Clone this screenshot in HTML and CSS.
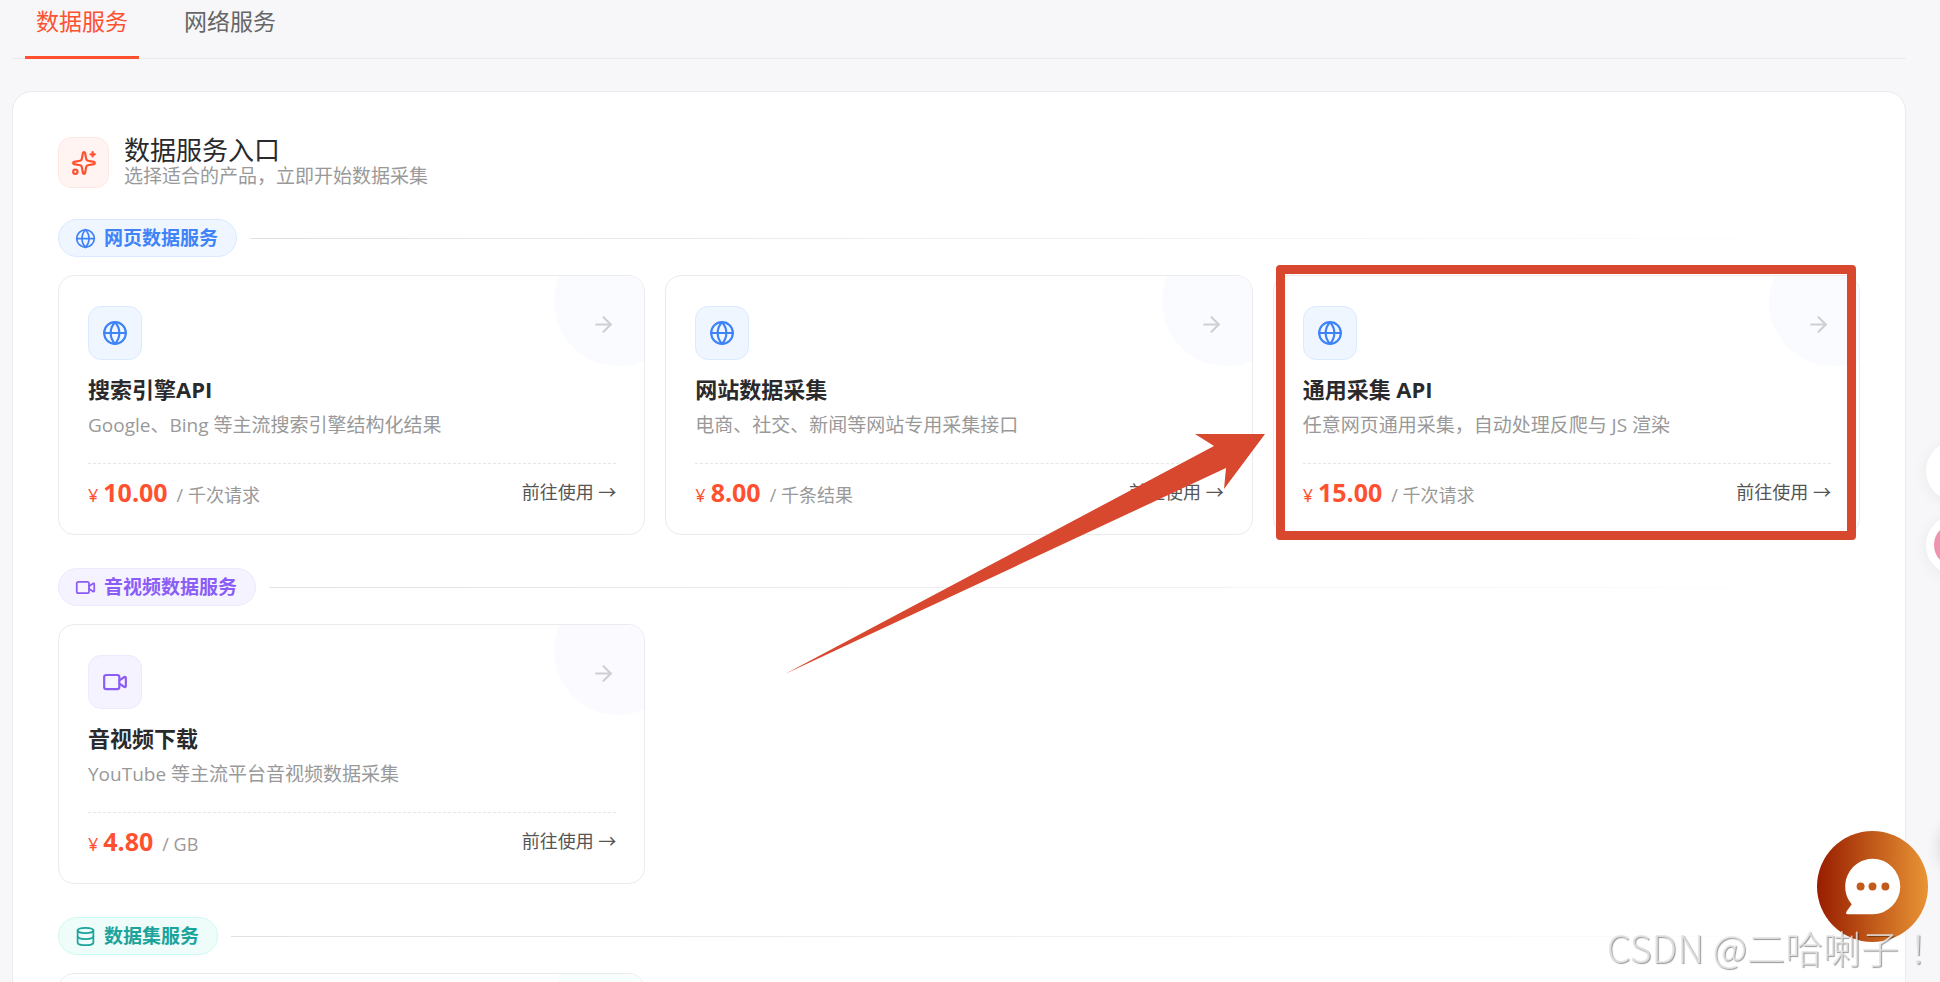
FILE: index.html
```html
<!DOCTYPE html>
<html lang="zh-CN">
<head>
<meta charset="utf-8">
<meta name="viewport" content="width=device-width, initial-scale=1">
<title>数据服务</title>
<link rel="stylesheet" href="styles.css">
</head>
<body>
<svg class="symbols" aria-hidden="true">
  <symbol id="globe" viewBox="0 0 24 24"><circle cx="12" cy="12" r="10"/><path d="M12 2a14.5 14.5 0 0 0 0 20 14.5 14.5 0 0 0 0-20"/><path d="M2 12h20"/></symbol>
  <symbol id="video" viewBox="0 0 24 24"><rect x="2" y="5.5" width="14" height="13" rx="2"/><path d="m16 10.5 4.7-3.1a.8.8 0 0 1 1.3.6v8a.8.8 0 0 1-1.3.6L16 13.5"/></symbol>
  <symbol id="database" viewBox="0 0 24 24"><ellipse cx="12" cy="5" rx="9" ry="3"/><path d="M3 5v14a9 3 0 0 0 18 0V5"/><path d="M3 12a9 3 0 0 0 18 0"/></symbol>
  <symbol id="arrow" viewBox="0 0 24 24"><path d="M5 12h14"/><path d="m12 5 7 7-7 7"/></symbol>
  <symbol id="sparkles" viewBox="0 0 24 24"><path d="M11.017 2.814a1 1 0 0 1 1.966 0l1.051 5.558a2 2 0 0 0 1.594 1.594l5.558 1.051a1 1 0 0 1 0 1.966l-5.558 1.051a2 2 0 0 0-1.594 1.594l-1.051 5.558a1 1 0 0 1-1.966 0l-1.051-5.558a2 2 0 0 0-1.594-1.594l-5.558-1.051a1 1 0 0 1 0-1.966l5.558-1.051a2 2 0 0 0 1.594-1.594z"/><path d="M20 2v4"/><path d="M22 4h-4"/><circle cx="4" cy="20" r="2"/></symbol>
</svg>

<nav class="tabs">
  <button class="tab tab-active" type="button">数据服务</button>
  <button class="tab" type="button">网络服务</button>
</nav>

<main class="panel">
  <header class="panel-head">
    <span class="panel-icon"><svg class="icon-lg"><use href="#sparkles"/></svg></span>
    <div>
      <h1 class="panel-title">数据服务入口</h1>
      <p class="panel-sub">选择适合的产品，立即开始数据采集</p>
    </div>
  </header>

  <section class="group web">
    <div class="group-head">
      <h2 class="pill"><svg class="icon-sm"><use href="#globe"/></svg>网页数据服务</h2>
      <span class="rule"></span>
    </div>
    <div class="grid">
      <div class="cell">
        <article class="card">
          <div class="card-top"><span class="badge"><svg class="icon-lg"><use href="#globe"/></svg></span><svg class="go"><use href="#arrow"/></svg></div>
          <h3 class="card-title">搜索引擎API</h3>
          <p class="card-desc">Google、Bing 等主流搜索引擎结构化结果</p>
          <div class="card-foot"><p class="price"><span class="yen">¥</span><strong class="amount">10.00</strong><span class="unit">/ 千次请求</span></p><a class="use" href="#search">前往使用 →</a></div>
        </article>
      </div>
      <div class="cell">
        <article class="card">
          <div class="card-top"><span class="badge"><svg class="icon-lg"><use href="#globe"/></svg></span><svg class="go"><use href="#arrow"/></svg></div>
          <h3 class="card-title">网站数据采集</h3>
          <p class="card-desc">电商、社交、新闻等网站专用采集接口</p>
          <div class="card-foot"><p class="price"><span class="yen">¥</span><strong class="amount">8.00</strong><span class="unit">/ 千条结果</span></p><a class="use" href="#site">前往使用 →</a></div>
        </article>
      </div>
      <div class="cell">
        <article class="card">
          <div class="card-top"><span class="badge"><svg class="icon-lg"><use href="#globe"/></svg></span><svg class="go"><use href="#arrow"/></svg></div>
          <h3 class="card-title">通用采集 API</h3>
          <p class="card-desc">任意网页通用采集，自动处理反爬与 JS 渲染</p>
          <div class="card-foot"><p class="price"><span class="yen">¥</span><strong class="amount">15.00</strong><span class="unit">/ 千次请求</span></p><a class="use" href="#general">前往使用 →</a></div>
        </article>
        <span class="mark-frame"></span>
        <svg class="mark-arrow" viewBox="0 0 480 240"><path d="M480 0H410l19 12L0 240l441-206-2 21z"/></svg>
      </div>
    </div>
  </section>

  <section class="group media">
    <div class="group-head">
      <h2 class="pill"><svg class="icon-sm"><use href="#video"/></svg>音视频数据服务</h2>
      <span class="rule"></span>
    </div>
    <div class="grid">
      <div class="cell">
        <article class="card">
          <div class="card-top"><span class="badge"><svg class="icon-lg"><use href="#video"/></svg></span><svg class="go"><use href="#arrow"/></svg></div>
          <h3 class="card-title">音视频下载</h3>
          <p class="card-desc">YouTube 等主流平台音视频数据采集</p>
          <div class="card-foot"><p class="price"><span class="yen">¥</span><strong class="amount">4.80</strong><span class="unit">/ GB</span></p><a class="use" href="#media">前往使用 →</a></div>
        </article>
      </div>
    </div>
  </section>

  <section class="group dataset">
    <div class="group-head">
      <h2 class="pill"><svg class="icon-sm"><use href="#database"/></svg>数据集服务</h2>
      <span class="rule"></span>
    </div>
    <div class="grid">
      <div class="cell">
        <article class="card">
          <div class="card-top"><span class="badge"><svg class="icon-lg"><use href="#database"/></svg></span><svg class="go"><use href="#arrow"/></svg></div>
        </article>
      </div>
    </div>
  </section>
</main>

<span class="side-dot side-plain"></span>
<span class="side-dot side-pink"></span>
<span class="side-dot side-shade"></span>
<button class="chat" type="button" aria-label="在线客服">
  <svg viewBox="0 0 112 112" class="chat-icon"><path fill="#fff" d="M56 28a28 28 0 0 1 0 56H31c-2 0-2-1-1-3l5-7A28 28 0 0 1 56 28z"/><circle cx="44" cy="56" r="4"/><circle cx="56" cy="56" r="4"/><circle cx="69" cy="56" r="4"/></svg>
</button>
<span class="watermark" lang="zh-TW">CSDN @二哈喇子！</span>
</body>
</html>
```
FILE: styles.css
```css
* { box-sizing: border-box; }

body {
  margin: 0;
  height: 100vh;
  overflow: hidden;
  background: #f7f7f9;
  color: #2a2a2c;
  font-family: "Open Sans", "Noto Sans CJK SC", sans-serif;
}

h1, h2, h3, p { margin: 0; }

svg {
  fill: none;
  stroke: currentColor;
  stroke-width: 2;
  stroke-linecap: round;
  stroke-linejoin: round;
  flex: none;
}

.symbols { display: none; }
.icon-sm { width: 21px; height: 21px; }
.icon-lg { width: 26px; height: 26px; }

/* Tabs */
.tabs {
  display: flex;
  gap: 34px;
  margin: 0 34px 0 12px;
  padding: 6px 13px 0;
  border-bottom: 1px solid #ebebed;
}

.tab {
  margin: 0 0 -1px;
  padding: 0 11px 20px;
  border: 0;
  border-bottom: 3px solid transparent;
  background: none;
  color: #666;
  font: inherit;
  font-size: 23px;
  line-height: 30px;
}

.tab-active { color: #ff5130; border-color: #ff5130; }

/* Panel */
.panel {
  margin: 32px 34px 0 12px;
  padding: 44px 45px 45px;
  background: #fff;
  border: 1px solid #ebebed;
  border-radius: 20px;
}

.panel-head {
  display: flex;
  align-items: center;
  gap: 15px;
  margin-bottom: 30px;
}

.panel-icon {
  display: grid;
  place-items: center;
  width: 51px;
  height: 51px;
  color: #ff5130;
  background: #fff4f1;
  border: 1px solid #ffe8e3;
  border-radius: 13px;
}

.panel-title { font-size: 26px; font-weight: 400; line-height: 28px; }
.panel-sub { font-size: 19px; line-height: 25px; color: #999; }

/* Groups */
.group { margin-bottom: 33px; }
.web { --tone: #3f83f8; --soft: #eff6ff; --edge: #dbeafe; --glow: #f9fbff; }
.media { --tone: #8b5cf6; --soft: #f5f3ff; --edge: #ede9fe; --glow: #fbfaff; }
.dataset { --tone: #1ba39c; --soft: #effdfa; --edge: #ccfbf1; --glow: #f9fefd; }

.group-head {
  display: flex;
  align-items: center;
  gap: 13px;
  margin-bottom: 18px;
}

.pill {
  display: flex;
  align-items: center;
  gap: 8px;
  height: 38px;
  padding: 0 18px 0 16px;
  color: var(--tone);
  background: var(--soft);
  border: 1px solid var(--edge);
  border-radius: 19px;
  font-size: 19px;
  font-weight: 600;
  line-height: 26px;
}

.rule {
  flex: 1;
  height: 1px;
  background: linear-gradient(90deg, #e2e2e5, transparent);
}

.grid {
  display: grid;
  grid-template-columns: repeat(3, minmax(0, 1fr));
  gap: 20px;
}

.cell { position: relative; }

.card {
  position: relative;
  overflow: hidden;
  padding: 30px 28px 29px 29px;
  background: #fff;
  border: 1px solid #ebebed;
  border-radius: 16px;
}

.card::before {
  content: "";
  position: absolute;
  top: -38px;
  right: -38px;
  width: 128px;
  height: 128px;
  border-radius: 50%;
  background: var(--glow);
}

.card-top {
  position: relative;
  display: flex;
  justify-content: space-between;
  align-items: flex-start;
}

.badge {
  display: grid;
  place-items: center;
  width: 54px;
  height: 54px;
  color: var(--tone);
  background: var(--soft);
  border: 1px solid var(--edge);
  border-radius: 13px;
}

.go { width: 25px; height: 25px; margin-top: 6px; color: #cfcfd2; }

.card-title {
  margin-top: 14px;
  font-size: 22px;
  font-weight: 700;
  line-height: 30px;
}

.card-desc {
  margin-top: 6px;
  color: #999;
  font-size: 19px;
  line-height: 30px;
}

.card-foot {
  display: flex;
  justify-content: space-between;
  align-items: center;
  margin-top: 23px;
  padding-top: 15px;
  border-top: 1px dashed #e6e6e8;
  line-height: 26px;
}

.price { display: flex; align-items: baseline; color: #ff5130; height: 26px; }
.yen { margin-right: 5px; font-size: 18px; }
.amount { font-size: 25px; font-weight: 700; }
.unit { margin-left: 9px; color: #999; font-size: 18px; }
.use { color: #555; font-size: 18px; text-decoration: none; }

/* Hand-drawn marks over the third card */
.mark-frame {
  position: absolute;
  inset: -10px 4px -5px 3px;
  border: 9px solid #d8482e;
  border-radius: 4px;
}

.mark-arrow {
  position: absolute;
  top: 159px;
  right: calc(100% + 8px);
  width: 480px;
  height: 240px;
  fill: #d8482e;
  stroke: none;
}

/* Floating widgets */
.side-dot {
  position: fixed;
  left: calc(100% - 14px);
  width: 60px;
  height: 60px;
  border-radius: 50%;
  background: #fff;
  box-shadow: 0 2px 16px rgba(0, 0, 0, .06);
}

.side-plain { top: 441px; }
.side-pink { top: 515px; border: 8px solid #fff; background: #f093ae; }
.side-shade { top: 815px; left: 100%; box-shadow: 0 2px 16px rgba(0, 0, 0, .14); }

.chat {
  position: fixed;
  right: 12px;
  bottom: 40px;
  width: 111px;
  height: 111px;
  padding: 0;
  border: 0;
  border-radius: 50%;
  background: linear-gradient(90deg, #981d00, #e99434);
}

.chat-icon { display: block; width: 100%; height: 100%; fill: #c25a1b; stroke: none; }

.watermark {
  position: fixed;
  right: 3px;
  bottom: 7px;
  color: rgba(228, 228, 228, .85);
  font-family: "Noto Sans CJK TC", sans-serif;
  font-size: 38px;
  font-weight: 300;
  line-height: 56px;
  text-shadow: 1px 1px 1px rgba(0, 0, 0, .4);
  pointer-events: none;
}
```
